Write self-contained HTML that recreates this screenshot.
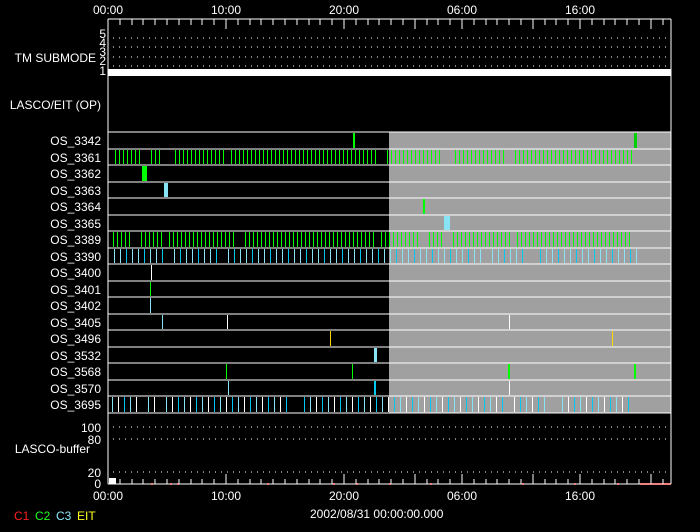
<!DOCTYPE html>
<html><head><meta charset="utf-8"><style>
html,body{margin:0;padding:0;background:#000;width:700px;height:532px;overflow:hidden}
svg{display:block}
text{font-family:"Liberation Sans",sans-serif;font-size:12px;fill:#fff}
</style></head><body>
<svg id="s" width="700" height="532" xmlns="http://www.w3.org/2000/svg" shape-rendering="crispEdges">
<rect x="389" y="132" width="282" height="281" fill="#a0a0a0"/>
<g id="bars"></g>
<g id="grid" stroke="#fff" stroke-width="1.3" fill="none"></g>
<rect x="108" y="69" width="563" height="7" fill="#fff"/>
<g text-anchor="middle">
<text x="108" y="14">00:00</text><text x="226" y="14">10:00</text><text x="344" y="14">20:00</text><text x="462" y="14">06:00</text><text x="580" y="14">16:00</text>
<text x="108" y="500">00:00</text><text x="226" y="500">10:00</text><text x="344" y="500">20:00</text><text x="462" y="500">06:00</text><text x="580" y="500">16:00</text>
</g>
<g text-anchor="end">
<text x="106" y="38" font-size="10">5</text><text x="106" y="47" font-size="10">4</text><text x="106" y="56" font-size="10">3</text><text x="106" y="65" font-size="10">2</text><text x="106" y="75" font-size="10">1</text>
<text x="96" y="62">TM SUBMODE</text>
<text x="101" y="109">LASCO/EIT (OP)</text>
<text x="101" y="432">100</text><text x="101" y="444">80</text><text x="101" y="477">20</text><text x="101" y="488">0</text>
<text x="90" y="453">LASCO-buffer</text>
</g>
<g id="lbl" text-anchor="end"></g>
<text x="310" y="518">2002/08/31  00:00:00.000</text>
<text x="14" y="520" font-size="10" style="fill:#ff2020">C1</text>
<text x="35" y="520" font-size="10" style="fill:#20ff20">C2</text>
<text x="56" y="520" font-size="10" style="fill:#90e8f8">C3</text>
<text x="77" y="520" font-size="10" style="fill:#ffff20">EIT</text>
</svg>
<script>
var NS="http://www.w3.org/2000/svg";
function el(p,t,a){var e=document.createElementNS(NS,t);for(var k in a)e.setAttribute(k,a[k]);p.appendChild(e);return e;}
var g=document.getElementById('grid'),b=document.getElementById('bars'),L=document.getElementById('lbl');
var X0=108,X1=671,ph=11.8;
el(g,'line',{x1:X0,y1:19,x2:X1,y2:19});
el(g,'line',{x1:X0,y1:19,x2:X0,y2:484});
el(g,'line',{x1:X1,y1:19,x2:X1,y2:484});
el(g,'line',{x1:X0,y1:484,x2:X1,y2:484});
for(var h=0;h<48;h++){var x=Math.round(X0+h*ph);if(x>X1)break;var big=h%10==0||h==26||h==36||h==46;
 el(g,'line',{x1:x,y1:19,x2:x,y2:big?29:25,'stroke-width':1});
 el(g,'line',{x1:x,y1:484,x2:x,y2:big?474:479,'stroke-width':1});}
[38,47,57,66,427,439,472].forEach(function(y){el(g,'line',{x1:113,y1:y,x2:X1-2,y2:y,'stroke-dasharray':'1 5','stroke-width':1});});
var names=["3342","3361","3362","3363","3364","3365","3389","3390","3400","3401","3402","3405","3496","3532","3568","3570","3695"];
var rh=16.53,T=132;
for(var i=0;i<=17;i++){var yy=Math.round(T+i*rh);el(g,'line',{x1:X0,y1:yy,x2:X1,y2:yy});}
names.forEach(function(n,i){var t=el(L,'text',{x:101,y:Math.round(T+i*rh+13)});t.textContent="OS_"+n;});
function bar(row,x,w,c){var y0=Math.round(T+row*rh)+1,y1=Math.round(T+(row+1)*rh)-1;el(b,'rect',{x:Math.round(x),y:y0,width:Math.max(1,Math.round(w)),height:y1-y0,fill:c});}
var G="#00ff00",C="#88e4f4",C2="#00c8f0",W="#ffffff",Y="#ffd700";
bar(0,353,2,G);bar(0,634,3,"#00d000");
bar(2,142,5,G);bar(3,164,4,C);bar(4,423,2,G);bar(5,444,6,C);
bar(8,151,1,W);bar(9,150,1,G);bar(10,150,1,C);
bar(11,162,1,C);bar(11,227,1,W);bar(11,509,1,W);
bar(12,330,1,Y);bar(12,612,1,Y);
bar(13,374,3,C);
bar(14,226,1,G);bar(14,352,1,G);bar(14,508,2,G);bar(14,634,2,G);
bar(15,228,1,C);bar(15,374,2,C2);bar(15,509,1,W);
function inGap(x,gaps){for(var k=0;k<gaps.length;k++)if(x>=gaps[k][0]&&x<=gaps[k][1])return true;return false;}
function series(row,x0,x1,step,cols,gaps){var j=0;for(var x=x0;x<x1;x+=step){j++;if(inGap(x,gaps))continue;bar(row,x,1,cols[j%cols.length]);}}
series(1,115,634,4,[G],[[142,147],[160,171],[226,230],[376,385],[441,452],[505,512]]);
series(6,113,632,4,[G],[[130,140],[162,168],[235,242],[375,380],[420,425],[443,452],[510,515]]);
series(7,114,638,6,[C2,C,C],[[165,172],[220,226],[485,490],[528,534]]);
series(16,112,630,6,[C2,C,W],[[139,145],[155,165],[290,300],[505,510],[548,556]]);
el(b,'rect',{x:109,y:478,width:7,height:6,fill:W});
[151,170,177,267,333,356,389,430,522,574,617].forEach(function(x){el(b,'rect',{x:x,y:483,width:2,height:2,fill:'#e00000'});});
el(b,'rect',{x:640,y:483,width:31,height:2,fill:'#e00000'});
</script>
</body></html>
